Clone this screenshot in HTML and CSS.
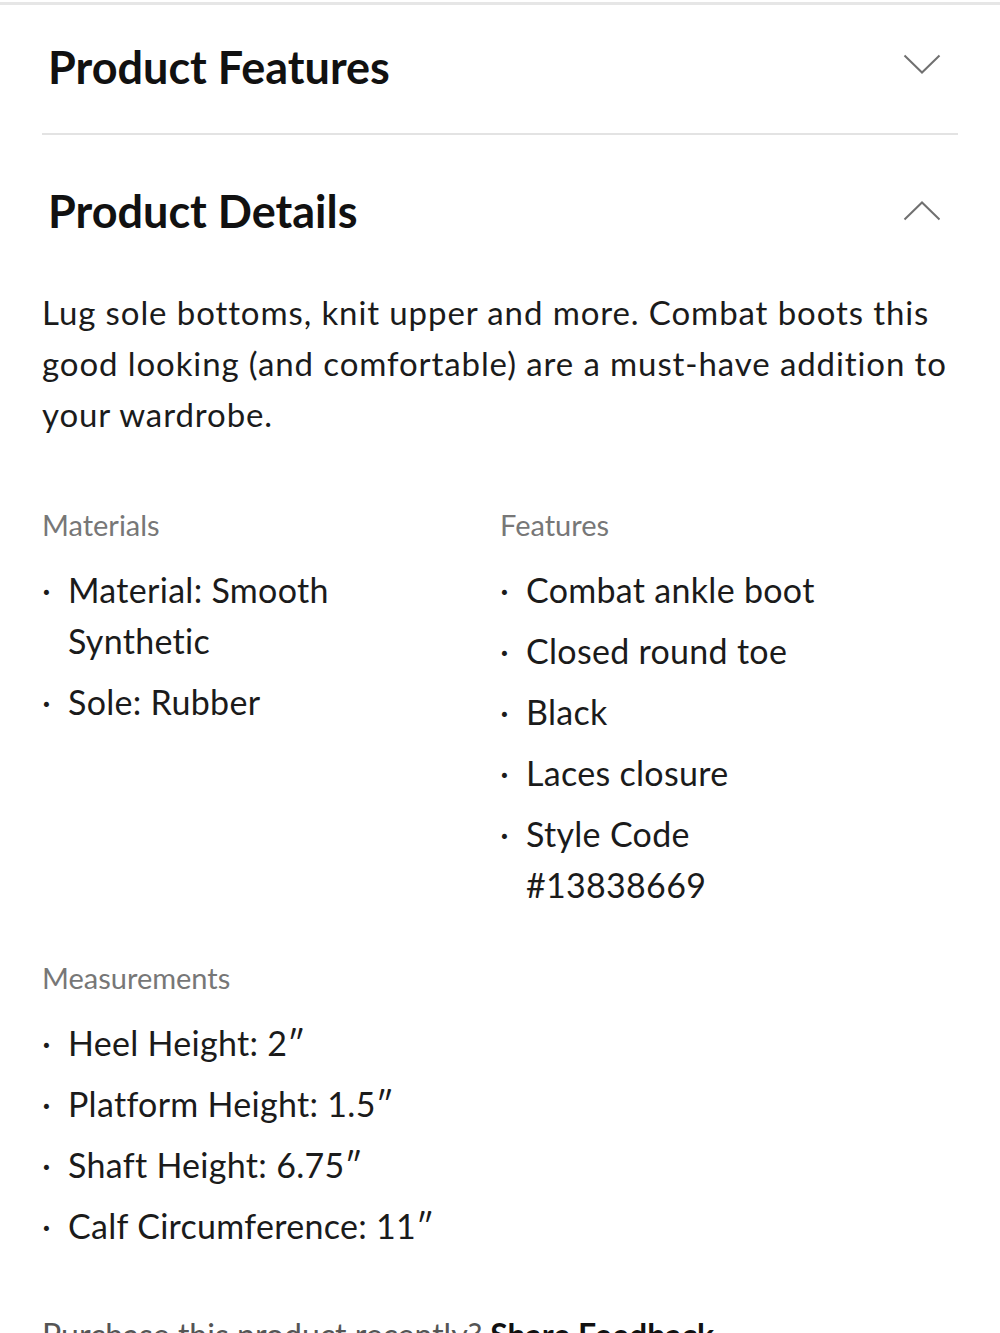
FILE: index.html
```html
<!DOCTYPE html>
<html lang="en">
<head>
<meta charset="utf-8">
<title>Product Details</title>
<link rel="stylesheet" href="styles.css">
</head>
<body>
<div class="top-rule"></div>
<main class="page">
  <section class="acc acc-first">
    <div class="acc-header">
      <h2 class="acc-title">Product Features</h2>
      <svg class="chev" width="38" height="20" viewBox="0 0 38 20"><path d="M1.5 1.5 L19 18.5 L36.5 1.5" fill="none" stroke="#707070" stroke-width="2"/></svg>
    </div>
  </section>
  <section class="acc acc-open">
    <div class="acc-header">
      <h2 class="acc-title">Product Details</h2>
      <svg class="chev" width="38" height="20" viewBox="0 0 38 20"><path d="M1.5 18.5 L19 1.5 L36.5 18.5" fill="none" stroke="#707070" stroke-width="2"/></svg>
    </div>
    <div class="acc-body">
      <p class="desc">Lug sole bottoms, knit upper and more. Combat boots this good looking (and comfortable) are a must-have addition to your wardrobe.</p>
      <div class="spec-grid">
        <div class="spec">
          <h3 class="spec-label">Materials</h3>
          <ul class="spec-list">
            <li>Material: Smooth Synthetic</li>
            <li>Sole: Rubber</li>
          </ul>
        </div>
        <div class="spec">
          <h3 class="spec-label">Features</h3>
          <ul class="spec-list">
            <li>Combat ankle boot</li>
            <li>Closed round toe</li>
            <li>Black</li>
            <li>Laces closure</li>
            <li>Style Code #13838669</li>
          </ul>
        </div>
        <div class="spec spec-wide">
          <h3 class="spec-label">Measurements</h3>
          <ul class="spec-list">
            <li>Heel Height: 2″</li>
            <li>Platform Height: 1.5″</li>
            <li>Shaft Height: 6.75″</li>
            <li>Calf Circumference: 11″</li>
          </ul>
        </div>
      </div>
      <p class="feedback">Purchase this product recently? <strong>Share Feedback</strong></p>
    </div>
  </section>
</main>
</body>
</html>
```

FILE: styles.css
```css
* { box-sizing: border-box; }
html, body { margin: 0; padding: 0; background: #fff; }
body {
  font-family: Lato, "Open Sans", "Liberation Sans", sans-serif;
  color: #1b1b1b;
}
.top-rule {
  margin-top: 2px;
  height: 3px;
  background: #e6e6e6;
}
.page { padding: 0 42px; }
.acc-header {
  display: flex;
  align-items: center;
  justify-content: space-between;
  padding: 0 17px 0 6px;
}
.acc-first .acc-header {
  padding-top: 32px;
  padding-bottom: 36px;
}
.acc-first { border-bottom: 2px solid #e3e3e3; }
.acc-open .acc-header {
  padding-top: 46px;
  padding-bottom: 46px;
}
.acc-title {
  margin: 0;
  font-size: 45px;
  line-height: 60px;
  font-weight: 700;
  color: #111;
}
.chev { display: block; }
.acc-first .chev { margin-top: -7px; }
.desc {
  margin: 0;
  font-size: 33px;
  line-height: 51px;
  letter-spacing: 0.9px;
}
.spec-grid {
  display: grid;
  grid-template-columns: 458px 458px;
  margin-top: 68px;
  row-gap: 51px;
}
.spec-wide { grid-column: 1 / -1; }
.spec-label {
  margin: 0;
  font-size: 29px;
  line-height: 34px;
  font-weight: 400;
  color: #777;
}
.spec-list {
  list-style: none;
  margin: 22px 0 0;
  padding: 0;
  display: flex;
  flex-direction: column;
  gap: 10px;
  max-width: 350px;
}
.spec-wide .spec-list { max-width: none; }
.spec-list li {
  display: flex;
  font-size: 34px;
  line-height: 51px;
  letter-spacing: 0.3px;
}
.spec-list li::before {
  content: "·";
  flex: 0 0 26px;
  padding-left: 0;
}
.feedback {
  margin: 62px 0 0;
  font-size: 32px;
  line-height: 44px;
  color: #555;
}
.feedback strong { color: #111; font-weight: 700; }
```
